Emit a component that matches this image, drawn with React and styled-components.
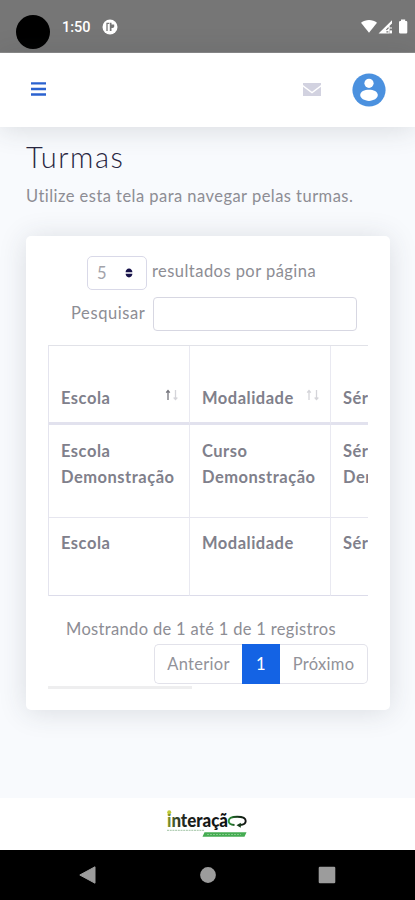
import React from 'react'
import styled, { createGlobalStyle } from 'styled-components'

const columns = [
  { title: 'Escola', value: 'Escola Demonstração', sorted: true },
  { title: 'Modalidade', value: 'Curso Demonstração' },
  { title: 'Série', value: 'Série Demonstração' },
]

export default function App() {
  return (
    <>
      <GlobalStyle />
      <Screen>
        <StatusBar>
          <Camera />
          <Clock>1:50</Clock>
          <AppBadge viewBox="0 0 16 16">
            <circle cx="8" cy="8" r="7.5" fill="#fff" />
            <path d="M5 12V4.4h2.3" fill="none" stroke="#767676" strokeWidth="1.3" />
            <path d="M7.8 3.7h1.7v1.8h2.7v2.2c-.4 1-1.5 1.4-2.7 1.4v3H7.8z" fill="#767676" />
          </AppBadge>
          <SystemIcons viewBox="0 0 48 16">
            <path d="M0 3.8C4.6.2 11.6.2 16 3.8L8 13.8z" fill="#fff" />
            <path d="M17.5 14.4 31 1.2v3.2l-2.4 2.4V8.4H31v1.2h-2.4v4.8z" fill="#fff" />
            <path d="M28.7 11.4H31v3h-2.3z" fill="#fff" />
            <path d="M25.4 10.8l2.2-2.2M25.4 12.8h2" stroke="#767676" strokeWidth="1.2" />
            <path d="M38 3.2q0-1.2 1.2-1.2H40V.6h4.2V2h1q1.1 0 1.1 1.2v10q0 1.3-1.2 1.3h-5.8q-1.3 0-1.3-1.3z" fill="#fff" />
          </SystemIcons>
        </StatusBar>

        <TopBar>
          <MenuIcon viewBox="0 0 15 14">
            <path d="M0 1.4h15M0 7h15M0 12.5h15" stroke="#2b62cf" strokeWidth="2.3" />
          </MenuIcon>
          <MailIcon viewBox="0 0 18 13">
            <path d="M0 0h18v2L9 8.8 0 2z" fill="#d2d2e0" />
            <path d="M0 3.8 9 10.5l9-6.7V13H0z" fill="#d2d2e0" />
          </MailIcon>
          <Avatar viewBox="0 0 34 34">
            <circle cx="17" cy="17" r="16.6" fill="#4b91df" />
            <circle cx="17" cy="10.3" r="4.6" fill="#fff" />
            <path d="M8.2 22.1c0-3.6 4.4-5.4 8.8-5.4s8.8 1.8 8.8 5.4c0 3.3-4.2 5.8-8.8 5.8s-8.8-2.5-8.8-5.8z" fill="#fff" />
          </Avatar>
        </TopBar>

        <Main>
          <Title>Turmas</Title>
          <Subtitle>Utilize esta tela para navegar pelas turmas.</Subtitle>
          <Card>
            <LengthRow>
              <LengthSelect>
                <span>5</span>
                <Arrows viewBox="0 0 8 10">
                  <path d="M.6 4.2C.6 2.4 2 .6 4 .6s3.4 1.8 3.4 3.6zM.6 5.8h6.8C7.4 7.6 6 9.4 4 9.4S.6 7.6.6 5.8z" fill="#17124a" />
                </Arrows>
              </LengthSelect>
              <LengthLabel>resultados por página</LengthLabel>
            </LengthRow>
            <SearchRow>
              <SearchLabel>Pesquisar</SearchLabel>
              <SearchInput />
            </SearchRow>

            <TableViewport>
              <Table>
                {columns.map(column => (
                  <HeadCell key={column.title}>
                    {column.title}
                    <SortIcon viewBox="0 0 16 12">
                      <path d="M4 11V1.5M2.2 3.6 4 1.5l1.8 2.1" stroke={column.sorted ? '#74747c' : '#d4d4d9'} />
                      <path d="M11.5 1v9.5M9.7 8.5l1.8 2.1 1.8-2.1" stroke="#d4d4d9" />
                    </SortIcon>
                  </HeadCell>
                ))}
                {columns.map(column => (
                  <BodyCell key={column.title}>{column.value}</BodyCell>
                ))}
                {columns.map(column => (
                  <FootCell key={column.title}>{column.title}</FootCell>
                ))}
              </Table>
            </TableViewport>

            <Info>Mostrando de 1 até 1 de 1 registros</Info>
            <Pagination>
              <PageLink $width={88}>Anterior</PageLink>
              <PageLink $width={38} $active>
                1
              </PageLink>
              <PageLink $width={88}>Próximo</PageLink>
            </Pagination>
            <ScrollTrack />
          </Card>
        </Main>

        <Footer>
          <Logo viewBox="0 0 80 28">
            <defs>
              <linearGradient id="word" x1="0" x2="1" y1="0" y2="0">
                <stop offset="0" stopColor="#8ea62e" />
                <stop offset=".12" stopColor="#43512a" />
                <stop offset=".3" stopColor="#1d211d" />
                <stop offset="1" stopColor="#111" />
              </linearGradient>
              <linearGradient id="ring" x1="0" x2="1" y1="0" y2="0">
                <stop offset="0" stopColor="#2f9a3a" />
                <stop offset=".45" stopColor="#173d1b" />
                <stop offset="1" stopColor="#111" />
              </linearGradient>
            </defs>
            <LogoWord x="0" y="16.5" textLength="61" lengthAdjust="spacingAndGlyphs" fill="url(#word)">
              interaçã
            </LogoWord>
            <circle cx="2.2" cy="2.2" r="2" fill="#c0ca38" />
            <path d="M67.5 15c-3.500-.2-5.800-1.500-5.800-4 0-2.800 3.500-4.200 8.500-4.200s8.500 1.400 8.500 4.200c0 2.600-2.200 3.800-5.700 4" fill="none" stroke="url(#ring)" strokeWidth="1.9" />
            <path d="M73.8 12.8v5l-4.300-2.600z" fill="#173d1b" />
            <path d="M0 20.300h37" stroke="#b3cfb6" strokeWidth="1.2" strokeDasharray="2 .7" />
            <path d="M37.5 22.300h42l-2 4.500h-42z" fill="#45ac52" />
            <path d="M40 24.500h34" stroke="#84c98b" strokeWidth="1.2" strokeDasharray="2 1" />
          </Logo>
        </Footer>

        <NavBar>
          <NavIcon viewBox="0 0 18 18">
            <path d="M.8 9 16 .8v16.400z" fill="#9c9c9c" stroke="#9c9c9c" strokeLinejoin="round" />
          </NavIcon>
          <NavIcon viewBox="0 0 18 18">
            <circle cx="9" cy="9" r="7.9" fill="#9c9c9c" />
          </NavIcon>
          <NavIcon viewBox="0 0 18 18">
            <rect x=".7" y=".7" width="16.6" height="16.6" rx="1.2" fill="#9c9c9c" />
          </NavIcon>
        </NavBar>
      </Screen>
    </>
  )
}

const GlobalStyle = createGlobalStyle`
  * {
    box-sizing: border-box;
  }

  body {
    margin: 0;
    font-family: Lato, 'Open Sans', sans-serif;
    font-size: 16.5px;
    color: #8d8d94;
  }

  svg {
    display: block;
    flex: none;
  }
`
const Screen = styled.div`
  display: flex;
  flex-direction: column;
  width: 415px;
  height: 900px;
  overflow: hidden;
  background: #f8fafd;
`
const StatusBar = styled.div`
  display: flex;
  flex: none;
  height: 53px;
  padding: 0 6px 0 16px;
  background: #767676;
  border-bottom: 1px solid #8b8b8b;
`
const Camera = styled.div`
  width: 34px;
  height: 34px;
  margin-top: 15px;
  border-radius: 50%;
  background: #000;
`
const Clock = styled.div`
  width: 52px;
  padding: 18px 0 0 12px;
  font-family: Roboto, sans-serif;
  font-size: 14.5px;
  font-weight: 500;
  line-height: 19px;
  color: #fff;
`
const AppBadge = styled.svg`
  width: 16px;
  height: 16px;
  margin-top: 19px;
`
const SystemIcons = styled.svg`
  width: 48px;
  height: 16px;
  margin: 19px 0 0 auto;
`
const TopBar = styled.header`
  display: flex;
  flex: none;
  align-items: center;
  height: 74px;
  padding: 0 29px 0 31px;
  background: #fff;
  box-shadow: 0 2px 28px rgba(50, 55, 65, 0.16);
`
const MenuIcon = styled.svg`
  width: 15px;
  height: 14px;
  margin-bottom: 2px;
`
const MailIcon = styled.svg`
  width: 18px;
  height: 13px;
  margin: 0 0 1px auto;
`
const Avatar = styled.svg`
  width: 34px;
  height: 34px;
  margin: 0 0 1px 31px;
`
const Main = styled.main`
  flex: 1;
  padding: 13px 25px 0 26px;
`
const Title = styled.h1`
  margin: 0;
  font-size: 29px;
  font-weight: 300;
  line-height: 34px;
  letter-spacing: 1.5px;
  color: #28263f;
`
const Subtitle = styled.p`
  margin: 10px 0 27px;
  font-size: 16.5px;
  line-height: 25px;
  letter-spacing: 0.46px;
  white-space: nowrap;
`
const Card = styled.section`
  width: 364px;
  height: 474px;
  padding: 20px 22px 0;
  border-radius: 5px;
  background: #fff;
  box-shadow: 0 2px 28px rgba(50, 55, 70, 0.15);
`
const LengthRow = styled.div`
  display: flex;
  align-items: center;
  margin-left: 39px;
`
const LengthSelect = styled.div`
  display: flex;
  align-items: center;
  justify-content: space-between;
  width: 60px;
  height: 34px;
  padding: 0 13px 1px 9px;
  border: 1px solid #d9d9e8;
  border-radius: 5px;
  color: #a3a3aa;
`
const Arrows = styled.svg`
  width: 8px;
  height: 10px;
`
const LengthLabel = styled.span`
  margin: -4px 0 0 5px;
  letter-spacing: 0.45px;
  white-space: nowrap;
`
const SearchRow = styled.label`
  display: flex;
  align-items: center;
  margin: 7px 0 0 23px;
`
const SearchLabel = styled.span`
  width: 82px;
  margin-top: -2px;
  letter-spacing: 0.6px;
`
const SearchInput = styled.input`
  width: 204px;
  height: 34px;
  border: 1px solid #d7d7e2;
  border-radius: 4px;
  background: #fff;
`
const TableViewport = styled.div`
  width: 320px;
  margin-top: 14px;
  overflow: hidden;
`
const Table = styled.div`
  display: grid;
  grid-template-columns: 141px 141px 141px;
  grid-template-rows: 79px 93px 78px;
  width: 423px;
  border-top: 1px solid #e1e2e8;
  border-left: 1px solid #e4e4ee;
`
const Cell = styled.div`
  padding: 12px 10px 0 12px;
  border-right: 1px solid #e9e9f1;
  border-bottom: 1px solid #e6e6ef;
  font-size: 16.5px;
  font-weight: 700;
  line-height: 25.5px;
  letter-spacing: 0.5px;
  color: #80808b;
`
const HeadCell = styled(Cell)`
  display: flex;
  align-items: flex-end;
  justify-content: space-between;
  padding: 0 9px 11px 12px;
  border-bottom: 3px solid #e2e2ee;
`
const BodyCell = styled(Cell)`
  padding-top: 14px;
`
const FootCell = styled(Cell)`
  padding-top: 13px;
  border-bottom-color: #dcdcea;
`
const SortIcon = styled.svg`
  width: 16px;
  height: 12px;
  margin-bottom: 10px;
  fill: none;
  stroke-width: 1.3;
`
const Info = styled.div`
  margin-top: 21px;
  padding-left: 18px;
  line-height: 25px;
  letter-spacing: 0.33px;
  white-space: nowrap;
`
const Pagination = styled.div`
  display: flex;
  width: 214px;
  height: 40px;
  margin: 2px 0 0 106px;
`
const PageLink = styled.div`
  display: flex;
  align-items: center;
  justify-content: center;
  width: ${({ $width }) => $width}px;
  padding-bottom: 1px;
  border: 1px solid ${({ $active }) => ($active ? '#1463e4' : '#e2e2ea')};
  background: ${({ $active }) => ($active ? '#1463e4' : '#fff')};
  color: ${({ $active }) => ($active ? '#fff' : '#929299')};
  letter-spacing: 0.3px;

  &:first-child {
    border-right: 0;
    border-radius: 5px 0 0 5px;
  }

  &:last-child {
    border-left: 0;
    border-radius: 0 5px 5px 0;
  }
`
const ScrollTrack = styled.div`
  width: 144px;
  height: 3px;
  margin-top: 2px;
  background: #eeeeef;
`
const Footer = styled.footer`
  display: flex;
  flex: none;
  height: 52px;
  padding: 12px 0 0 167px;
  background: #fff;
`
const Logo = styled.svg`
  width: 80px;
  height: 28px;
`
const LogoWord = styled.text`
  font-family: Lato, sans-serif;
  font-size: 18px;
  font-weight: 900;
`
const NavBar = styled.nav`
  display: flex;
  flex: none;
  justify-content: space-between;
  height: 50px;
  padding: 16px 79px 0;
  background: #000;
`
const NavIcon = styled.svg`
  width: 18px;
  height: 18px;
`
